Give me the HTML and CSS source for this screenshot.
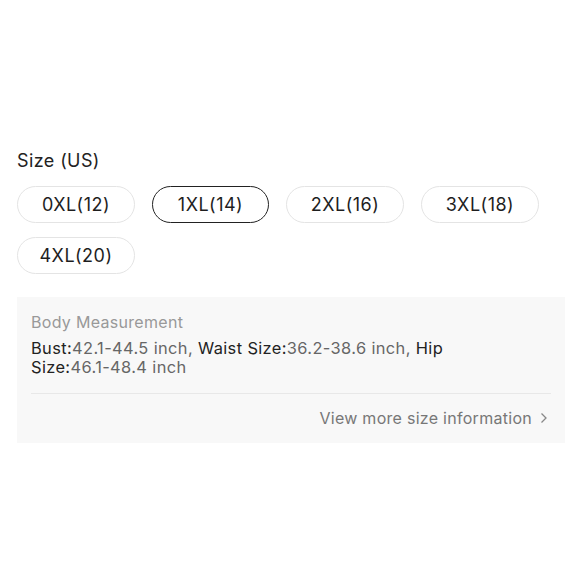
FILE: index.html
```html
<!DOCTYPE html>
<html>
<head>
<meta charset="utf-8">
<link rel="stylesheet" href="styles.css">
</head>
<body>
<div class="page">
  <div class="title">Size (US)</div>
  <div class="sizes">
    <div class="pill">0XL(12)</div>
    <div class="pill selected">1XL(14)</div>
    <div class="pill">2XL(16)</div>
    <div class="pill">3XL(18)</div>
    <div class="pill">4XL(20)</div>
  </div>
  <div class="box">
    <div class="box-title">Body Measurement</div>
    <div class="measure"><span class="nw"><span class="k">Bust:</span>42.1-44.5</span> inch, <span class="k">Waist</span> <span class="nw"><span class="k">Size:</span>36.2-38.6</span> inch, <span class="k">Hip</span> <span class="nw"><span class="k">Size:</span>46.1-48.4</span> inch</div>
    <div class="divider"></div>
    <div class="more">View more size information <svg class="chev" width="8" height="12" viewBox="0 0 8 12"><path d="M1.5 1.5 L6 6 L1.5 10.5" fill="none" stroke="#888" stroke-width="1.3"/></svg></div>
  </div>
</div>
</body>
</html>
```
FILE: styles.css
```css
html, body { margin: 0; padding: 0; background: #fff; }
body { font-family: Inter, "Noto Sans", sans-serif; color: #222; }
.page { padding: 150px 15px 0 17px; }
.title { font-size: 18px; line-height: 22px; color: #222; letter-spacing: 0.4px; }
.sizes { display: flex; flex-wrap: wrap; gap: 14px 17px; margin-top: 14px; width: 530px; }
.pill { width: 118px; height: 37px; box-sizing: border-box; border: 1px solid #e4e4e4; border-radius: 19px; display: flex; align-items: center; justify-content: center; font-size: 18px; color: #1e1e1e; letter-spacing: 0.5px; }
.pill.selected { border: 1.5px solid #222; width: 117px; }
.box { margin-top: 23px; width: 548px; box-sizing: border-box; background: #f8f8f8; padding: 14px 14px 14px 14px; }
.box-title { font-size: 16px; color: #999; line-height: 22px; letter-spacing: 0.3px; }
.measure { margin-top: 6px; font-size: 16.4px; line-height: 19px; color: #666; letter-spacing: 0.38px; }
.measure .k { color: #222; }
.nw { white-space: nowrap; }
.divider { height: 1px; background: #e8e8e8; margin-top: 16px; }
.more { display: flex; justify-content: flex-end; align-items: center; gap: 8px; font-size: 16px; color: #777; margin-top: 13px; line-height: 22px; letter-spacing: 0.28px; }
.chev { margin-right: 3px; }
```
